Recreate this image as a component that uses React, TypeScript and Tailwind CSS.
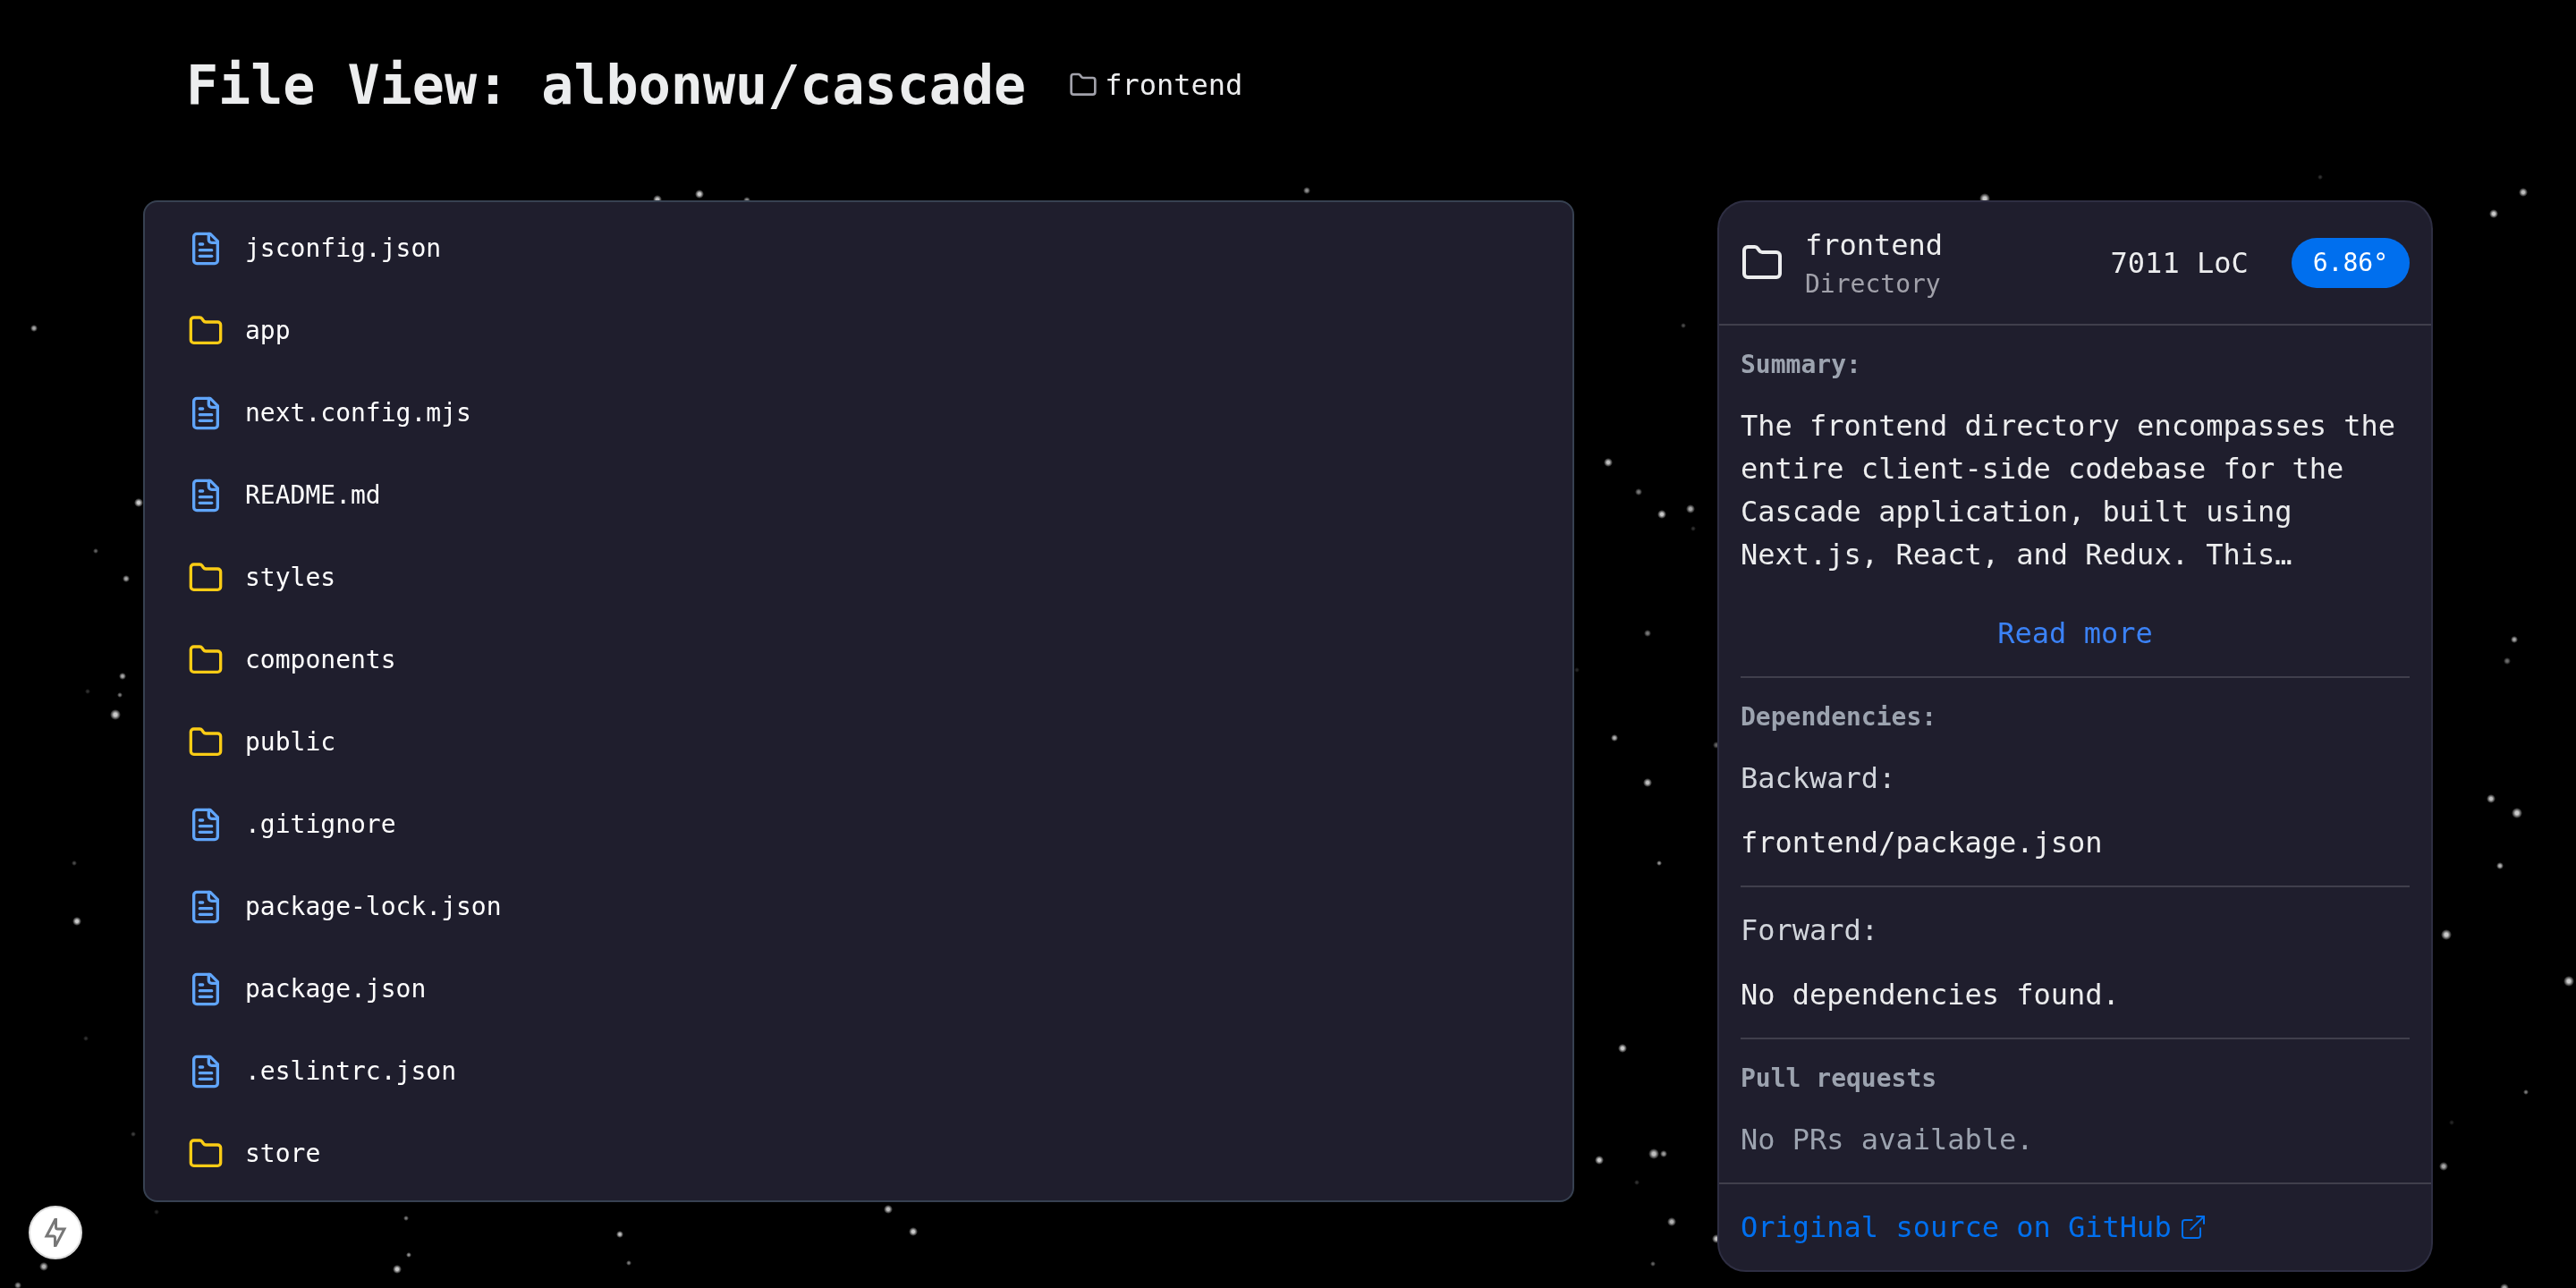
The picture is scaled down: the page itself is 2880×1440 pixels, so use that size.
import React from "react";
import { Folder } from "lucide-react";

type Entry = { name: string; kind: "file" | "folder" };

const entries: Entry[] = [
  { name: "jsconfig.json", kind: "file" },
  { name: "app", kind: "folder" },
  { name: "next.config.mjs", kind: "file" },
  { name: "README.md", kind: "file" },
  { name: "styles", kind: "folder" },
  { name: "components", kind: "folder" },
  { name: "public", kind: "folder" },
  { name: ".gitignore", kind: "file" },
  { name: "package-lock.json", kind: "file" },
  { name: "package.json", kind: "file" },
  { name: ".eslintrc.json", kind: "file" },
  { name: "store", kind: "folder" },
];

/* x, y, radius, opacity */
const stars: [number, number, number, number][] = [
  [38, 367, 3, 0.7], [155, 562, 4, 0.85], [107, 616, 2, 0.4], [141, 647, 3, 0.7],
  [137, 756, 3, 0.7], [98, 773, 2, 0.2], [134, 777, 2, 0.5], [129, 799, 5, 0.85],
  [83, 965, 2, 0.3], [86, 1030, 4, 0.85], [96, 1161, 2, 0.2], [149, 1268, 2, 0.25],
  [175, 1355, 2, 0.15], [49, 1416, 4, 0.75], [20, 1437, 3, 0.6], [454, 1362, 2, 0.5],
  [457, 1403, 2, 0.6], [444, 1419, 4, 0.85], [693, 1380, 3, 0.8], [703, 1412, 2, 0.5],
  [993, 1352, 4, 0.8], [1021, 1377, 4, 0.85], [735, 223, 4, 0.8], [782, 217, 4, 0.85],
  [835, 224, 3, 0.6], [1461, 213, 3, 0.6], [2219, 222, 5, 0.85], [2594, 198, 2, 0.2],
  [1882, 364, 2, 0.3], [1798, 517, 4, 0.8], [1832, 550, 3, 0.5], [1858, 575, 4, 0.85],
  [1890, 569, 4, 0.7], [1893, 591, 2, 0.2], [1842, 708, 3, 0.5], [1763, 749, 2, 0.15],
  [1805, 825, 3, 0.75], [1842, 875, 4, 0.8], [1855, 965, 2, 0.6], [1919, 833, 3, 0.4],
  [1814, 1172, 4, 0.85], [1788, 1297, 4, 0.85], [1849, 1290, 5, 0.8], [1860, 1290, 3, 0.65],
  [1830, 1322, 2, 0.2], [1869, 1366, 4, 0.75], [1919, 1385, 4, 0.8], [1848, 1413, 2, 0.4],
  [2821, 215, 4, 0.8], [2788, 239, 4, 0.85], [2811, 715, 3, 0.7], [2803, 739, 3, 0.45],
  [2785, 893, 4, 0.8], [2814, 909, 5, 0.85], [2795, 968, 3, 0.75], [2735, 1045, 5, 0.85],
  [2872, 1097, 5, 0.85], [2824, 1221, 2, 0.5], [2741, 1255, 2, 0.15], [2732, 1304, 4, 0.7],
  [2800, 1440, 4, 0.7],
];

function Starfield() {
  return (
    <svg
      aria-hidden="true"
      className="fixed inset-0 h-full w-full"
      viewBox="0 0 2880 1440"
      preserveAspectRatio="xMidYMid slice"
    >
      <defs>
        <radialGradient id="star">
          <stop offset="0.3" stopColor="#eee" />
          <stop offset="1" stopColor="#eee" stopOpacity="0" />
        </radialGradient>
      </defs>
      {stars.map(([x, y, r, o]) => (
        <circle key={`${x}-${y}`} cx={x} cy={y} r={r + 1} opacity={o} fill="url(#star)" />
      ))}
    </svg>
  );
}

function FileIcon() {
  return (
    <svg
      aria-hidden="true"
      className="size-10 text-[#60a5fa]"
      viewBox="0 0 24 24"
      fill="none"
      stroke="currentColor"
      strokeWidth="2"
      strokeLinecap="round"
      strokeLinejoin="round"
    >
      <path d="M15 2H6a2 2 0 0 0-2 2v16a2 2 0 0 0 2 2h12a2 2 0 0 0 2-2V7Z" />
      <path d="M14 2v4a2 2 0 0 0 2 2h4" />
      <path d="M10 9H8" />
      <path d="M16 13H8" />
      <path d="M16 17H8" />
    </svg>
  );
}

function FileList() {
  return (
    <ul className="rounded-2xl border-2 border-[#374151] bg-[#1f1e2d] py-1.5">
      {entries.map((entry) => (
        <li key={entry.name}>
          <a href={`#${entry.name}`} className="flex h-[92px] items-center gap-6 px-12 text-[28px] text-white">
            {entry.kind === "file" ? <FileIcon /> : <Folder className="size-10 text-[#facc15]" />}
            <span>{entry.name}</span>
          </a>
        </li>
      ))}
    </ul>
  );
}

function ExternalIcon() {
  return (
    <svg
      aria-hidden="true"
      className="mx-2 size-8"
      viewBox="0 0 24 24"
      fill="none"
      stroke="currentColor"
      strokeWidth="1.5"
      strokeLinecap="round"
      strokeLinejoin="round"
    >
      <path d="M18 13v6a2 2 0 01-2 2H5a2 2 0 01-2-2V8a2 2 0 012-2h6" />
      <path d="M15 3h6v6" />
      <path d="M10 14L21 3" />
    </svg>
  );
}

function Heading({ children }: { children: React.ReactNode }) {
  return <h2 className="text-[28px] leading-10 font-bold text-[#9ca3af]">{children}</h2>;
}

function Divider() {
  return <hr className="border-t-2 border-[#403f4c]" />;
}

function DetailCard() {
  return (
    <section className="rounded-[32px] border-2 border-[#2e2e42] bg-[#1f1e2d] text-[32px] leading-[48px]">
      <header className="flex items-center gap-6 p-6">
        <Folder className="size-12" />
        <div className="flex-1">
          <p>frontend</p>
          <p className="text-[28px] leading-10 text-[#a1a1aa]">Directory</p>
        </div>
        <div className="flex items-center gap-12">
          <span>7011 LoC</span>
          <span className="flex h-14 items-center rounded-full bg-[#006fee] px-6 text-[28px] text-white">6.86°</span>
        </div>
      </header>
      <Divider />
      <div className="flex flex-col gap-6 p-6">
        <Heading>Summary:</Heading>
        <p className="line-clamp-4">
          The frontend directory encompasses the entire client-side codebase for the Cascade application, built using
          Next.js, React, and Redux. This…
        </p>
        <button type="button" className="mt-4 self-center text-[#3b82f6]">
          Read more
        </button>
        <Divider />
        <Heading>Dependencies:</Heading>
        <h3 className="text-[#d1d5db]">Backward:</h3>
        <p>frontend/package.json</p>
        <Divider />
        <h3 className="text-[#d1d5db]">Forward:</h3>
        <p>No dependencies found.</p>
        <Divider />
        <Heading>Pull requests</Heading>
        <p className="text-[#9ca3af]">No PRs available.</p>
      </div>
      <Divider />
      <footer className="p-6">
        <a href="#github" className="flex items-center text-[#006fee]">
          Original source on GitHub
          <ExternalIcon />
        </a>
      </footer>
    </section>
  );
}

export default function App() {
  return (
    <div className="min-h-screen bg-black font-['DejaVu_Sans_Mono',monospace] text-[#ecedee]">
      <Starfield />
      <div className="relative px-40">
        <header className="flex items-center gap-12 px-12 pt-[59px] pb-[93px]">
          <h1 className="text-[60px] leading-[72px] font-bold">File View: albonwu/cascade</h1>
          <nav aria-label="Breadcrumb">
            <a href="#frontend" className="flex items-center gap-2 text-[32px] leading-[48px]">
              <Folder className="size-8 text-[#a1a1aa]" />
              frontend
            </a>
          </nav>
        </header>
        <main className="grid grid-cols-[2fr_1fr] items-start gap-40">
          <FileList />
          <DetailCard />
        </main>
      </div>
      <button
        type="button"
        aria-label="Static route"
        className="fixed bottom-8 left-8 flex size-[60px] items-center justify-center rounded-full border-2 border-[#dddddd] bg-white text-[#777777]"
      >
        <svg aria-hidden="true" className="size-8" viewBox="0 0 32 32" fill="none" stroke="currentColor" strokeWidth="3">
          <path d="M16.5 0V10q0 2 2 2H26L15.5 32V22q0-2-2-2H6Z" />
        </svg>
      </button>
    </div>
  );
}
